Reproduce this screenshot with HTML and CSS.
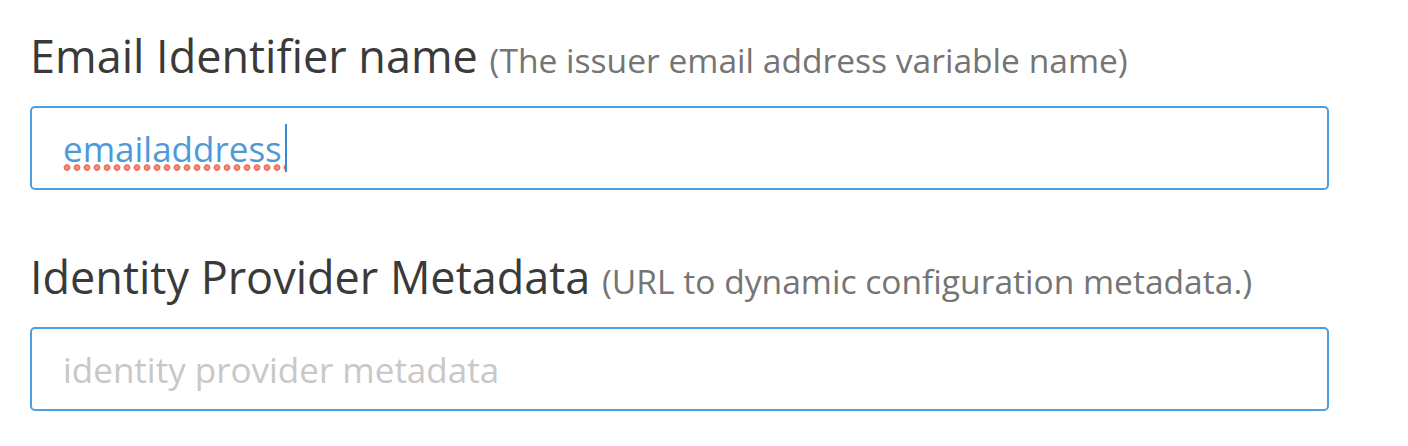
FILE: index.html
```html
<!DOCTYPE html>
<html>
<head>
<meta charset="utf-8">
<link rel="stylesheet" href="styles.css">
</head>
<body>
<div class="form">
  <div class="field">
    <label class="label">Email Identifier name <span class="hint">(The issuer email address variable name)</span></label>
    <div class="input focused"><span class="value">emailaddress</span><span class="caret"></span></div>
  </div>
  <div class="field second">
    <label class="label">Identity Provider Metadata <span class="hint">(URL to dynamic configuration metadata.)</span></label>
    <div class="input"><span class="placeholder">identity provider metadata</span></div>
  </div>
</div>
</body>
</html>
```
FILE: styles.css
```css
html, body { margin: 0; padding: 0; background: #fff; }
body { font-family: "Open Sans", "Liberation Sans", sans-serif; }
.form { padding: 26px 0 0 30px; width: 1299px; }
.field { display: flex; flex-direction: column; }
.field.second { margin-top: 57px; }
.label { display: block; font-size: 45px; line-height: 60px; height: 60px; color: #3a3a3a; white-space: nowrap; }
.hint { font-size: 33.6px; line-height: 34px; color: #757575; }
.input { margin-top: 20px; height: 80px; border: 2px solid #4a9fe2; border-radius: 5px; display: flex; align-items: center; padding-left: 31px; font-size: 35px; }
.value { color: #4c9ad9; position: relative; }
.value::after { content: ""; position: absolute; left: -1px; right: -3px; bottom: 0; height: 8px; background-image: radial-gradient(circle at 50% 45%, #f5a08c 0, #ea6f5b 2.8px, rgba(234,111,91,0.5) 3.4px, transparent 3.8px); background-size: 10px 8px; background-repeat: repeat-x; }
.caret { width: 2px; height: 48px; background: #3a86d4; margin-left: 3px; }
.placeholder { color: #c8c8c8; }
```
